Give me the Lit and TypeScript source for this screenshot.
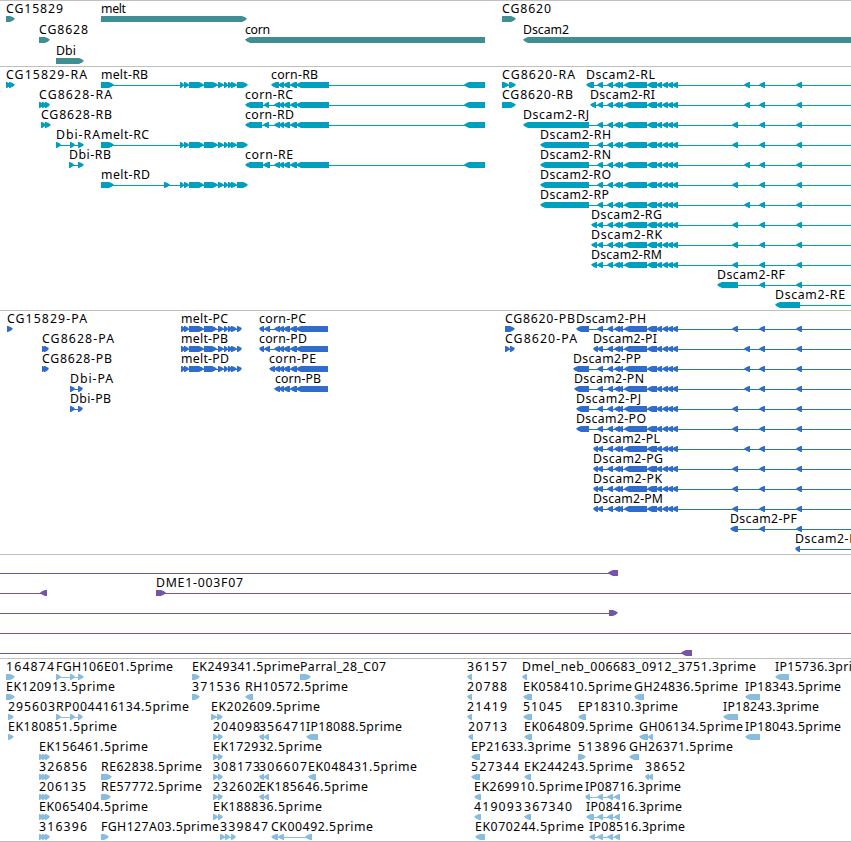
import { LitElement, html, css, svg } from 'lit';
import { customElement } from 'lit/decorators.js';

type Span = [number, number];
type Strand = 'fwd' | 'rev';

interface Feature {
  label: string;
  // left edge and right edge of the label
  text: Span;
  strand: Strand;
  parts: Span[];
  // the intron line runs over this range
  line: Span;
}

interface Track {
  name: string;
  laneHeight: number;
  lanes: Feature[][];
}

const VIEW_WIDTH = 851;
const BAR_TOP = 15;
const BAR_HEIGHT = 6;
const TIP = 5;
const BASELINE = 12;

function feature(strand: Strand, label: string, start: number, end: number, parts: Span[], line?: Span): Feature {
  const from = parts.length ? parts[0][0] : 0;
  const to = parts.length ? parts[parts.length - 1][1] : VIEW_WIDTH;
  return { label, text: [start, end], strand, parts, line: line || [from, to] };
}

const fwd = (label: string, start: number, end: number, ...parts: Span[]) => feature('fwd', label, start, end, parts);
const rev = (label: string, start: number, end: number, ...parts: Span[]) => feature('rev', label, start, end, parts);

// exons shared between the isoforms
const MELT: Span[] = [[180, 184], [184, 189], [189, 204], [204, 218], [218, 224], [224, 228], [228, 232], [231, 237], [237, 248]];
const MELT_CDS: Span[] = [[181, 185], [184, 189], [189, 204], [204, 217], [218, 224], [224, 228], [228, 232], [231, 237], [237, 242]];
const CORN_MID: Span[] = [[274, 280], [279, 284], [283, 290], [290, 297]];
const CORN: Span[] = [...CORN_MID, [296, 329], [464, 485]];
const CORN_CDS: Span[] = [...CORN_MID, [296, 328]];
const DSCAM: Span[] = [
  [597, 603], [607, 613], [614, 620], [618, 623], [624, 647], [647, 657],
  [656, 662], [662, 668], [667, 673], [672, 678],
];
const DSCAM_TAIL: Span[] = [[759, 765], [796, 802]];

function dscam(isoform: string, start: number, end: number, first: Span, variant: number): Feature {
  const parts: Span[] = [first, ...DSCAM, [variant - 1, variant + 5], ...DSCAM_TAIL];
  return feature('rev', `Dscam2-${isoform}`, start, end, parts, [start, VIEW_WIDTH]);
}

const cg8628 = (label: string, end: number) => fwd(label, 39, end, [39, 44], [42, 47], [45, 50]);
const pair = (label: string, end: number) => fwd(label, 213, end, [213, 218], [218, 223]);
const revPair = (label: string, end: number) => rev(label, 259, end, [259, 264], [264, 269]);
const ip08 = (label: string, start: number, end: number, first: Span) =>
  rev(label, start, end, first, [597, 603], [607, 613], [614, 620]);

const TRACKS: Track[] = [
  {
    name: 'gene',
    laneHeight: 21,
    lanes: [
      [
        fwd('CG15829', 6, 63, [6, 15]),
        fwd('melt', 101, 126, [101, 247]),
        fwd('CG8620', 502, 551, [502, 516]),
      ],
      [
        fwd('CG8628', 39, 88, [39, 50]),
        rev('corn', 245, 270, [245, 485]),
        rev('Dscam2', 523, 569, [523, 860]),
      ],
      [fwd('Dbi', 56, 76, [56, 84])],
    ],
  },
  {
    name: 'transcript',
    laneHeight: 20,
    lanes: [
      [
        fwd('CG15829-RA', 6, 87, [6, 11], [9, 15]),
        fwd('melt-RB', 101, 148, [101, 114], ...MELT),
        rev('corn-RB', 271, 318, [271, 279], [278, 284], [283, 290], [290, 297], [296, 329], [464, 485]),
        fwd('CG8620-RA', 502, 575, [502, 509], [509, 516]),
        dscam('RL', 586, 655, [586, 594], 745),
      ],
      [
        cg8628('CG8628-RA', 112),
        rev('corn-RC', 245, 293, [245, 263], [264, 269], ...CORN),
        fwd('CG8620-RB', 502, 573, [502, 516]),
        dscam('RI', 590, 655, [590, 596], 745),
      ],
      [
        fwd('CG8628-RB', 41, 112, [41, 46], [45, 51]),
        rev('corn-RD', 245, 294, [245, 262], [263, 269], ...CORN),
        dscam('RJ', 523, 589, [523, 589], 733),
      ],
      [
        fwd('Dbi-RA', 56, 100, [56, 61], [70, 75], [78, 84]),
        fwd('melt-RC', 101, 149, [101, 114], ...MELT),
        dscam('RH', 540, 611, [540, 589], 733),
      ],
      [
        fwd('Dbi-RB', 69, 111, [69, 74], [78, 84]),
        rev('corn-RE', 245, 293, [245, 263], [263, 270], ...CORN),
        dscam('RN', 540, 611, [540, 589], 745),
      ],
      [
        fwd('melt-RD', 101, 150, [101, 114], [164, 170], ...MELT),
        dscam('RO', 540, 611, [540, 589], 733),
      ],
      [dscam('RP', 540, 609, [540, 589], 745)],
      [dscam('RG', 591, 662, [591, 597], 733)],
      [dscam('RK', 591, 662, [591, 597], 733)],
      [dscam('RM', 591, 662, [591, 597], 733)],
      [feature('rev', 'Dscam2-RF', 717, 785, [[717, 738], ...DSCAM_TAIL], [717, VIEW_WIDTH])],
      [feature('rev', 'Dscam2-RE', 775, 845, [[775, 800]], [775, VIEW_WIDTH])],
    ],
  },
  {
    name: 'protein',
    laneHeight: 20,
    lanes: [
      [
        fwd('CG15829-PA', 7, 87, [7, 13]),
        fwd('melt-PC', 181, 228, ...MELT_CDS),
        rev('corn-PC', 259, 306, [259, 264], [264, 270], ...CORN_CDS),
        fwd('CG8620-PB', 505, 575, [505, 515]),
        dscam('PH', 576, 646, [576, 589], 733),
      ],
      [
        fwd('CG8628-PA', 42, 114, [42, 46], [44, 49]),
        fwd('melt-PB', 181, 228, ...MELT_CDS),
        rev('corn-PD', 259, 307, [259, 264], [264, 270], ...CORN_CDS),
        fwd('CG8620-PA', 505, 577, [505, 510], [510, 515]),
        dscam('PI', 593, 657, [593, 598], 745),
      ],
      [
        fwd('CG8628-PB', 42, 112, [42, 46], [44, 49]),
        fwd('melt-PD', 181, 229, ...MELT_CDS),
        rev('corn-PE', 269, 316, [269, 275], ...CORN_CDS),
        dscam('PP', 573, 641, [573, 589], 745),
      ],
      [
        fwd('Dbi-PA', 70, 113, [70, 75], [78, 83]),
        rev('corn-PB', 275, 321, ...CORN_CDS),
        dscam('PN', 574, 644, [574, 589], 745),
      ],
      [
        fwd('Dbi-PB', 70, 111, [70, 75], [78, 83]),
        dscam('PJ', 576, 641, [576, 589], 733),
      ],
      [dscam('PO', 576, 646, [576, 589], 733)],
      [dscam('PL', 593, 660, [593, 598], 745)],
      [dscam('PG', 593, 663, [593, 598], 733)],
      [dscam('PK', 593, 662, [593, 598], 733)],
      [dscam('PM', 593, 663, [593, 598], 733)],
      [feature('rev', 'Dscam2-PF', 730, 797, [[730, 738], ...DSCAM_TAIL], [730, VIEW_WIDTH])],
      [feature('rev', 'Dscam2-PE', 795, 864, [[795, 800]], [795, VIEW_WIDTH])],
    ],
  },
  {
    name: 'bac',
    laneHeight: 20,
    lanes: [
      [feature('rev', '', 0, 0, [[608, 618]], [-1, 618])],
      [
        feature('rev', '', 0, 0, [[40, 47]], [-1, 47]),
        feature('fwd', 'DME1-003F07', 156, 243, [[156, 166]], [156, VIEW_WIDTH]),
      ],
      [feature('fwd', '', 0, 0, [[609, 618]], [-1, 618])],
      [feature('fwd', '', 0, 0, [], [-1, VIEW_WIDTH])],
      [feature('rev', '', 0, 0, [[681, 692]], [-1, 692])],
    ],
  },
  {
    name: 'est',
    laneHeight: 20,
    lanes: [
      [
        fwd('164874', 6, 54, [6, 15]),
        fwd('FGH106E01.5prime', 56, 173, [56, 61], [70, 75], [78, 84]),
        fwd('EK249341.5prime', 192, 300, [192, 200]),
        fwd('Parral_28_C07', 300, 386, [300, 311]),
        rev('36157', 467, 507, [467, 472]),
        rev('Dmel_neb_006683_0912_3751.3prime', 522, 756, [522, 527]),
        rev('IP15736.3prime', 775, 871, [775, 789]),
      ],
      [
        fwd('EK120913.5prime', 6, 115, [6, 15]),
        fwd('371536', 192, 240, [192, 200]),
        rev('RH10572.5prime', 245, 348, [245, 253]),
        rev('20788', 467, 507, [467, 472]),
        rev('EK058410.5prime', 523, 632, [523, 532]),
        rev('GH24836.5prime', 634, 738, [634, 644]),
        rev('IP18343.5prime', 745, 841, [745, 760]),
      ],
      [
        fwd('295603', 8, 55, [8, 14]),
        fwd('RP004416134.5prime', 56, 189, [56, 61], [70, 75], [78, 83]),
        fwd('EK202609.5prime', 211, 320, [211, 217], [217, 223]),
        rev('21419', 467, 507, [467, 472]),
        rev('51045', 523, 562, [523, 532]),
        rev('EP18310.3prime', 578, 678, [578, 586]),
        rev('IP18243.3prime', 723, 819, [723, 738]),
      ],
      [
        fwd('EK180851.5prime', 8, 117, [8, 14]),
        pair('204098', 260),
        revPair('356471', 306),
        rev('IP18088.5prime', 306, 402, [306, 318]),
        rev('20713', 468, 507, [468, 473]),
        rev('EK064809.5prime', 524, 633, [524, 532]),
        rev('GH06134.5prime', 639, 743, [639, 648], [648, 653]),
        rev('IP18043.5prime', 745, 841, [745, 760]),
      ],
      [
        cg8628('EK156461.5prime', 148),
        pair('EK172932.5prime', 322),
        rev('EP21633.3prime', 471, 571, [471, 480]),
        fwd('513896', 578, 626, [578, 586]),
        rev('GH26371.5prime', 629, 733, [629, 639]),
      ],
      [
        cg8628('326856', 87),
        fwd('RE62838.5prime', 101, 202, [101, 112]),
        pair('308173', 260),
        revPair('306607', 307),
        rev('EK048431.5prime', 308, 417, [308, 316]),
        rev('527344', 471, 519, [471, 480]),
        rev('EK244243.5prime', 524, 633, [524, 531]),
        rev('38652', 645, 685, [645, 649], [648, 653]),
      ],
      [
        cg8628('206135', 86),
        fwd('RE57772.5prime', 101, 202, [101, 111]),
        pair('232602', 260),
        revPair('EK185646.5prime', 368),
        rev('EK269910.5prime', 474, 583, [474, 481]),
        ip08('IP08716.3prime', 585, 681, [585, 590]),
      ],
      [
        cg8628('EK065404.5prime', 148),
        pair('EK188836.5prime', 322),
        rev('419093', 474, 522, [474, 481]),
        rev('367340', 524, 572, [524, 531]),
        ip08('IP08416.3prime', 586, 682, [586, 594]),
      ],
      [
        cg8628('316396', 87),
        fwd('FGH127A03.5prime', 101, 219, [101, 109]),
        fwd('339847', 220, 268, [220, 225], [225, 230], [231, 236]),
        rev('CK00492.5prime', 271, 373, [271, 278], [278, 284], [305, 312]),
        rev('EK070244.5prime', 475, 584, [475, 485]),
        ip08('IP08516.3prime', 589, 685, [589, 595]),
      ],
    ],
  },
];

@customElement('feature-lane')
export class FeatureLane extends LitElement {
  static properties = {
    features: { attribute: false },
    height: { type: Number },
  };

  declare features: Feature[];
  declare height: number;

  static styles = css`
    :host {
      display: block;
    }
    svg {
      display: block;
      overflow: visible;
    }
    .label {
      font-family: "Noto Sans", "DejaVu Sans", sans-serif;
      font-size: 12.3px;
      fill: #000;
    }
    .bar {
      fill: var(--feature-color);
    }
  `;

  arrow(strand: Strand, [from, to]: Span) {
    const mid = BAR_TOP + BAR_HEIGHT / 2 - 0.2;
    const bottom = BAR_TOP + BAR_HEIGHT;
    const tip = Math.min(TIP, to - from - 1);
    // signed step from the tip back into the bar
    const dir = strand === 'fwd' ? -1 : 1;
    const head = strand === 'fwd' ? to : from;
    const tail = strand === 'fwd' ? from : to;
    const points = [
      [tail, BAR_TOP],
      [head + dir * tip, BAR_TOP],
      [head + dir * tip * 0.4, BAR_TOP + 1.3],
      [head, mid],
      [head + dir * tip * 0.4, bottom - 1.6],
      [head + dir * tip, bottom],
      [tail, bottom],
    ];
    return svg`<polygon class="bar" points=${points.join(' ')}></polygon>`;
  }

  renderFeature({ label, text, strand, parts, line }: Feature) {
    return svg`
      ${parts.length === 1 && line[0] === parts[0][0] && line[1] === parts[0][1]
        ? ''
        : svg`<rect class="bar" x=${line[0] + 1} y=${BAR_TOP + 3} width=${line[1] - line[0] - (line[1] < VIEW_WIDTH ? 2 : 1)} height="1"></rect>`}
      ${parts.map((part) => this.arrow(strand, part))}
      ${label
        ? svg`<text class="label" x=${text[0]} y=${BASELINE} textLength=${text[1] - text[0]}>${label}</text>`
        : ''}
    `;
  }

  render() {
    return html`
      <svg width=${VIEW_WIDTH} height=${this.height}>
        ${this.features.map((f) => this.renderFeature(f))}
      </svg>
    `;
  }
}

@customElement('app-root')
export class AppRoot extends LitElement {
  static styles = css`
    :host {
      display: flex;
      flex-direction: column;
      width: 851px;
      height: 842px;
      overflow: hidden;
      background: #fff;
    }
    .track {
      display: flex;
      flex-direction: column;
      border-top: 1px solid #c0c0c0;
      padding-bottom: 3px;
    }
    .gene {
      --feature-color: #3f8e94;
      padding-bottom: 2px;
    }
    .transcript {
      --feature-color: #009fbf;
    }
    .protein {
      --feature-color: #306ccc;
    }
    .bac {
      --feature-color: #7555a9;
    }
    .est {
      --feature-color: #89bddf;
      padding-bottom: 2px;
      border-bottom: 1px solid #c0c0c0;
    }
  `;

  render() {
    return TRACKS.map((track) => html`
      <section class="track ${track.name}">
        ${track.lanes.map((lane) => html`
          <feature-lane .features=${lane} .height=${track.laneHeight}></feature-lane>
        `)}
      </section>
    `);
  }
}
